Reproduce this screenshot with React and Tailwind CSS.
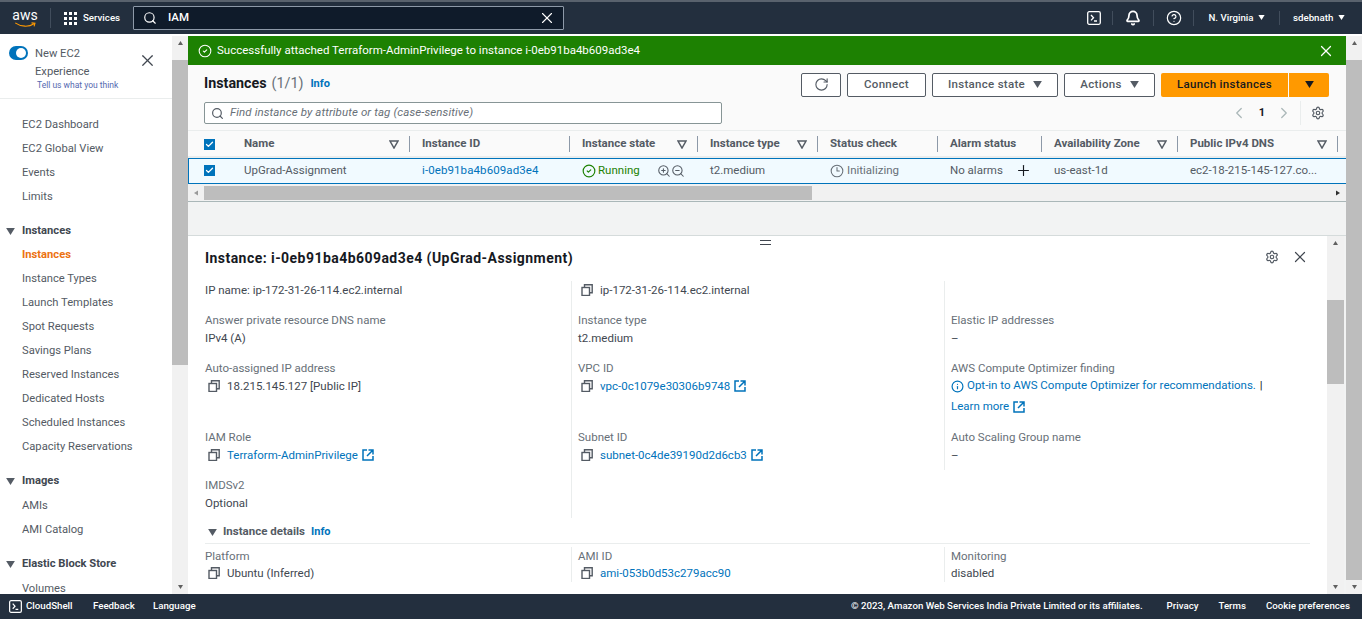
import React from 'react'
import { Search, X, Bell, CircleHelp, RotateCw, Settings, ChevronLeft, ChevronRight, ZoomIn, ZoomOut, Clock3, Plus, CircleCheck, Info, Check } from 'lucide-react'

const Tri = ({ className = '' }) => (
  <svg viewBox="0 0 10 8" className={className}><path d="M0 0h10L5 8z" fill="currentColor" /></svg>
)

const SortTri = () => (
  <svg viewBox="0 0 10 9" className="w-[10px] h-[9px] text-[#545b64]"><path d="M1 1h8L5 8z" fill="none" stroke="currentColor" strokeWidth="1.5" /></svg>
)

const CopyIcon = () => (
  <svg viewBox="0 0 12 12" className="w-[12px] h-[12px] shrink-0 ml-[3px] text-[#545b64]" fill="none" stroke="currentColor" strokeWidth="1.4">
    <rect x="1" y="3.5" width="7.5" height="8" />
    <path d="M3.5 3.5V.8h7.7v8H8.5" />
  </svg>
)

const ExtIcon = () => (
  <svg viewBox="0 0 12 12" className="w-[12px] h-[12px] shrink-0 -ml-[3px] text-[#0073bb]" fill="none" stroke="currentColor" strokeWidth="1.5">
    <path d="M5 1H1v10h10V7" />
    <path d="M6.5 1H11v4.5M11 1 5 7" />
  </svg>
)

const TerminalIcon = ({ size = 'w-[14px] h-[14px]' }) => (
  <svg viewBox="0 0 14 14" className={size} fill="none" stroke="currentColor" strokeWidth="1.3">
    <rect x="0.7" y="0.7" width="12.6" height="12.6" rx="1.5" />
    <path d="M4 4l2.5 2.7L4 9.4M7 10h3" />
  </svg>
)

const Checkbox = () => (
  <span className="w-[11px] h-[11px] bg-[#0073bb] flex items-center justify-center">
    <Check size={9} strokeWidth={3.5} className="text-white" />
  </span>
)

const VScroll = ({ top, height, className = '' }) => (
  <div className={`flex flex-col items-center bg-[#f1f1f1] shrink-0 relative ${className}`}>
    <div className="h-[14px] flex items-center text-[#606060]"><Tri className="w-[7px] h-[4px] rotate-180" /></div>
    <div className="w-full bg-[#bdbdbd]" style={{ marginTop: top, height }} />
    <div className="mt-auto h-[14px] flex items-center text-[#606060]"><Tri className="w-[7px] h-[4px]" /></div>
  </div>
)

const NavItem = ({ children, active }) => (
  <div className={`h-6 flex items-center pl-[22px] ${active ? 'text-[#ec7211] font-bold' : 'text-[#545b64]'}`}>{children}</div>
)

const NavGroup = ({ title, items, active, className = '', headClass = '' }) => (
  <div className={className}>
    <div className={`h-6 flex items-center font-bold text-[#414750] ${headClass}`}>
      <Tri className="w-[9px] h-[7px] ml-[6px] mr-[7px] text-[#545b64]" />
      {title}
    </div>
    {items.map((item) => (
      <NavItem key={item} active={item === active}>{item}</NavItem>
    ))}
  </div>
)

const columns = [
  { title: 'Name', w: 'w-[176px]', pl: 'pl-[10px]', sort: true },
  { title: 'Instance ID', w: 'w-[160px]', pl: 'pl-[12px]' },
  { title: 'Instance state', w: 'w-[128px]', pl: 'pl-[12px]', sort: true },
  { title: 'Instance type', w: 'w-[120px]', pl: 'pl-[12px]', sort: true },
  { title: 'Status check', w: 'w-[120px]', pl: 'pl-[12px]' },
  { title: 'Alarm status', w: 'w-[104px]', pl: 'pl-[12px]' },
  { title: 'Availability Zone', w: 'w-[136px]', pl: 'pl-[12px]', sort: true },
  { title: 'Public IPv4 DNS', w: 'w-[160px]', pl: 'pl-[12px]', sort: true },
]

const Label = ({ children }) => <div className="h-[18px] leading-[18px] text-[#687078]">{children}</div>
const Value = ({ children, className = '' }) => <div className={`h-[18px] leading-[18px] text-[#414750] flex items-center gap-[7px] ${className}`}>{children}</div>
const Link = ({ children }) => <span className="text-[#0073bb]">{children}</span>

export default function App() {
  return (
    <div className="h-[619px] w-[1362px] overflow-hidden flex flex-col text-[11.5px] bg-white" style={{ fontFamily: 'Roboto, sans-serif' }}>
      {/* top nav */}
      <div className="h-[34px] shrink-0 bg-[#232f3e] border-t-2 border-[#59626d] flex items-center text-white">
        <div className="w-[50px] flex flex-col items-center leading-none">
          <span className="text-[14px] leading-[12px]">aws</span>
          <svg viewBox="0 0 26 7" className="w-[25px] h-[6px] mt-[1px]"><path d="M1 1c7 5 16 5 22 1M20 1l4 .5-1 3.5" fill="none" stroke="#ff9900" strokeWidth="1.3" /></svg>
        </div>
        <div className="w-px h-5 bg-[#414d5c]" />
        <div className="grid grid-cols-3 gap-[2px] ml-[13px] w-[13px]">
          {Array.from({ length: 9 }).map((_, i) => <span key={i} className="w-[3px] h-[3px] bg-white" />)}
        </div>
        <span className="ml-[6px] w-[50px] text-[9.7px] font-medium">Services</span>
        <div className="w-[431px] h-[24px] bg-[#0f1b2a] border border-[#8d99a8] rounded-[1px] flex items-center pl-[9px] pr-[7px]">
          <Search size={14} strokeWidth={2} className="text-white" />
          <span className="ml-[11px] font-medium text-[11.5px]">IAM</span>
          <X size={18} strokeWidth={1.5} className="ml-auto" />
        </div>
        <div className="ml-auto flex items-center">
          <div className="w-[38px] flex justify-center border-r border-[#414d5c]"><TerminalIcon /></div>
          <div className="w-[41px] flex justify-center border-r border-[#414d5c]"><Bell size={16} strokeWidth={2.6} /></div>
          <div className="w-[40px] flex justify-center border-r border-[#414d5c]"><CircleHelp size={16} strokeWidth={1.8} /></div>
          <div className="w-[86px] flex justify-center items-center gap-[4px] border-r border-[#414d5c] text-[9.7px] font-medium">N. Virginia <Tri className="w-[7px] h-[5px]" /></div>
          <div className="w-[82px] flex items-center gap-[5px] pl-[13px] text-[9.7px] font-medium">sdebnath <Tri className="w-[7px] h-[5px]" /></div>
        </div>
      </div>

      <div className="h-[2px] shrink-0 bg-white" />

      <div className="flex-1 flex min-h-0">
        {/* sidebar */}
        <div className="w-[172px] shrink-0 overflow-hidden bg-white text-[11.2px]">
          <div className="h-[63px] border-b border-[#eaeded] flex pl-[9px] pt-[9px] relative">
            <span className="w-[19px] h-[14px] mt-[1px] rounded-full bg-[#0073bb] flex items-center justify-end pr-[2px]"><span className="w-[10px] h-[10px] bg-white rounded-full" /></span>
            <div className="ml-[7px] text-[#545b64] leading-[18px]">
              <div>New EC2</div>
              <div>Experience</div>
            </div>
            <X size={19} strokeWidth={1.5} className="absolute left-[138px] top-[15px] text-[#414750]" />
            <span className="absolute left-[37px] top-[43px] text-[8.5px] text-[#5569b0]">Tell us what you think</span>
          </div>
          <div className="pt-[14px]">
            <NavItem>EC2 Dashboard</NavItem>
            <NavItem>EC2 Global View</NavItem>
            <NavItem>Events</NavItem>
            <NavItem>Limits</NavItem>
            <NavGroup className="mt-[10px]" title="Instances" active="Instances" items={['Instances', 'Instance Types', 'Launch Templates', 'Spot Requests', 'Savings Plans', 'Reserved Instances', 'Dedicated Hosts', 'Scheduled Instances', 'Capacity Reservations']} />
            <NavGroup className="mt-[10px]" headClass="mb-px" title="Images" items={['AMIs', 'AMI Catalog']} />
            <NavGroup className="mt-[10px]" headClass="mb-px" title="Elastic Block Store" items={['Volumes']} />
          </div>
        </div>
        <VScroll top={10} height={305} className="w-[16px]" />

        {/* main column */}
        <div className="w-[1158px] shrink-0 flex flex-col min-h-0 bg-[#f2f3f3]">
          <div className="h-[29px] shrink-0 bg-[#1d8102] text-white flex items-center pl-[10px] pr-[11px]">
            <CircleCheck size={14} strokeWidth={1.8} />
            <span className="ml-[5px]">Successfully attached Terraform-AdminPrivilege to instance i-0eb91ba4b609ad3e4</span>
            <X size={18} strokeWidth={1.6} className="ml-auto" />
          </div>

          <div className="bg-[#fafafa] pl-[16px] pr-[17px] h-[66px] shrink-0 relative border-b border-[#eaeded]">
            <div className="flex items-center h-[31px] pt-[8px]">
              <span className="text-[14.3px] font-bold text-[#16191f] -mt-[2px]">Instances</span>
              <span className="text-[14.3px] text-[#687078] ml-[5px] -mt-[2px]">(1/1)</span>
              <span className="text-[11px] font-bold text-[#0073bb] ml-[7px]">Info</span>
              <div className="ml-auto flex items-center gap-[6px] font-medium text-[#545b64] tracking-[0.3px]">
                <button className="w-[40px] h-[24px] bg-white border border-[#545b64] rounded-[2px] flex items-center justify-center"><RotateCw size={15} strokeWidth={1.8} /></button>
                <button className="w-[79px] h-[24px] bg-white border border-[#545b64] rounded-[2px]">Connect</button>
                <button className="w-[126px] h-[24px] bg-white border border-[#545b64] rounded-[2px] flex items-center justify-center gap-[8px]">Instance state <Tri className="w-[9px] h-[7px]" /></button>
                <button className="w-[91px] h-[24px] bg-white border border-[#545b64] rounded-[2px] flex items-center justify-center gap-[8px]">Actions <Tri className="w-[9px] h-[7px]" /></button>
                <div className="flex gap-px">
                  <button className="w-[127px] h-[24px] bg-[#ff9900] text-[#16191f] rounded-l-[2px]">Launch instances</button>
                  <button className="w-[40px] h-[24px] bg-[#ff9900] text-[#16191f] rounded-r-[2px] flex items-center justify-center"><Tri className="w-[9px] h-[7px]" /></button>
                </div>
              </div>
            </div>
            <div className="flex items-center mt-[5px]">
              <div className="w-[518px] h-[22px] bg-white border border-[#879596] rounded-[2px] flex items-center pl-[6px]">
                <Search size={13} strokeWidth={2.2} className="text-[#545b64]" />
                <span className="ml-[6px] italic text-[#687078] tracking-[0.1px]">Find instance by attribute or tag (case-sensitive)</span>
              </div>
              <div className="ml-auto flex items-center h-[24px] text-[#aab7b8]">
                <ChevronLeft size={18} strokeWidth={1.7} />
                <span className="ml-[11px] mr-[10px] font-bold text-[#16191f] text-[11px]">1</span>
                <ChevronRight size={18} strokeWidth={1.7} />
                <div className="w-px h-[24px] bg-[#eaeded] ml-[7px]" />
                <Settings size={14} strokeWidth={2} className="text-[#545b64] ml-[10px] mr-[4px]" />
              </div>
            </div>
          </div>

          {/* table */}
          <div className="h-[27px] shrink-0 bg-[#fafafa] flex items-center pt-px font-bold text-[#545b64] border-b-2 border-[#eaeded]">
            <div className="w-[46px] pl-[16px] shrink-0 flex items-center"><Checkbox /></div>
            {columns.map((c) => (
              <div key={c.title} className={`${c.w} ${c.pl} shrink-0 h-[16px] flex items-center justify-between pr-[10px] border-r border-[#8d99a8] whitespace-nowrap`}>
                <span>{c.title}</span>
                {c.sort && <SortTri />}
              </div>
            ))}
          </div>
          <div className="h-[26px] shrink-0 bg-[#f1faff] border border-r-0 border-[#0073bb] flex items-center text-[#545b64] pb-px">
            <div className="w-[45px] pl-[15px] shrink-0 flex items-center"><Checkbox /></div>
            <div className="w-[176px] pl-[10px] shrink-0">UpGrad-Assignment</div>
            <div className="w-[160px] pl-[12px] shrink-0 text-[#0073bb] tracking-[0.1px]">i-0eb91ba4b609ad3e4</div>
            <div className="w-[128px] pl-[12px] shrink-0 flex items-center text-[#1d8102]">
              <CircleCheck size={14} strokeWidth={2} />
              <span className="ml-[2px]">Running</span>
              <ZoomIn size={14} strokeWidth={1.8} className="ml-[17px] text-[#545b64]" />
              <ZoomOut size={14} strokeWidth={1.8} className="text-[#545b64]" />
            </div>
            <div className="w-[120px] pl-[12px] shrink-0">t2.medium</div>
            <div className="w-[120px] pl-[12px] shrink-0 flex items-center text-[#687078]"><Clock3 size={14} strokeWidth={1.8} /><span className="ml-[3px]">Initializing</span></div>
            <div className="w-[104px] pl-[12px] shrink-0 flex items-center">No alarms<Plus size={17} strokeWidth={1.6} className="ml-[12px] text-[#16191f]" /></div>
            <div className="w-[136px] pl-[12px] shrink-0">us-east-1d</div>
            <div className="w-[140px] pl-[12px] shrink-0 whitespace-nowrap">ec2-18-215-145-127.co...</div>
          </div>
          <div className="h-[18px] shrink-0 flex items-center bg-[#f1f1f1] border-b border-[#aab7b8]">
            <div className="w-[16px] flex justify-center text-[#9a9a9a]"><Tri className="w-[6px] h-[4px] rotate-90" /></div>
            <div className="w-[608px] h-[14px] bg-[#bdbdbd]" />
            <div className="ml-auto w-[16px] flex justify-center text-[#303030]"><Tri className="w-[6px] h-[4px] -rotate-90" /></div>
          </div>

          <div className="h-[34px] shrink-0 border-b border-[#d5dbdb]" />

          {/* details */}
          <div className="flex-1 flex min-h-0">
            <div className="flex-1 min-w-0 overflow-hidden bg-white relative pl-[17px]">
              <span className="absolute left-[572px] top-[4px] w-[11px] h-[5px] border-y border-[#414750]" />
              <div className="h-[45px] flex items-center text-[14px] font-bold tracking-[0.45px] text-[#16191f] relative">
                Instance: i-0eb91ba4b609ad3e4 (UpGrad-Assignment)
                <Settings size={14} strokeWidth={2} className="absolute left-[1060px] top-[14px] text-[#545b64]" />
                <X size={18} strokeWidth={1.6} className="absolute left-[1086px] top-[12px] text-[#414750]" />
              </div>
              <div className="grid grid-cols-[366px_373px_366px] whitespace-nowrap">
                <div className="h-[30px]"><Value className="text-[#545b64]">IP name: ip-172-31-26-114.ec2.internal</Value></div>
                <div className="h-[30px] border-l border-[#eaeded] pl-[6px]"><Value><CopyIcon />ip-172-31-26-114.ec2.internal</Value></div>
                <div className="h-[30px] border-l border-[#eaeded] pl-[6px]" />

                <div className="h-[48px]"><Label>Answer private resource DNS name</Label><Value>IPv4 (A)</Value></div>
                <div className="h-[48px] border-l border-[#eaeded] pl-[6px]"><Label>Instance type</Label><Value>t2.medium</Value></div>
                <div className="h-[48px] border-l border-[#eaeded] pl-[6px]"><Label>Elastic IP addresses</Label><Value>–</Value></div>

                <div className="h-[69px]"><Label>Auto-assigned IP address</Label><Value><CopyIcon />18.215.145.127 [Public IP]</Value></div>
                <div className="h-[69px] border-l border-[#eaeded] pl-[6px]"><Label>VPC ID</Label><Value><CopyIcon /><Link>vpc-0c1079e30306b9748</Link><ExtIcon /></Value></div>
                <div className="h-[69px] border-l border-[#eaeded] pl-[6px]">
                  <Label>AWS Compute Optimizer finding</Label>
                  <div className="h-[18px] flex items-center gap-[3px] text-[#0073bb]"><Info size={13} strokeWidth={2.2} />Opt-in to AWS Compute Optimizer for recommendations.<span className="text-[#16191f] ml-[1px]">|</span></div>
                  <div className="h-[18px] mt-[3px] flex items-center gap-[7px] text-[#0073bb]">Learn more <ExtIcon /></div>
                </div>

                <div className="h-[48px]"><Label>IAM Role</Label><Value><CopyIcon /><Link>Terraform-AdminPrivilege</Link><ExtIcon /></Value></div>
                <div className="h-[48px] border-l border-[#eaeded] pl-[6px]"><Label>Subnet ID</Label><Value><CopyIcon /><Link>subnet-0c4de39190d2d6cb3</Link><ExtIcon /></Value></div>
                <div className="h-[42px] border-l border-[#eaeded] pl-[6px]"><Label>Auto Scaling Group name</Label><Value>–</Value></div>

                <div className="h-[42px]"><Label>IMDSv2</Label><Value>Optional</Value></div>
                <div className="h-[42px] border-l border-[#eaeded] pl-[6px]" />
                <div />
              </div>
              <div className="h-[26px] mr-[17px] flex items-center border-b border-[#eaeded] font-bold text-[#545b64] pl-[3px] pt-[3px]">
                <Tri className="w-[9px] h-[7px] mr-[6px]" />
                Instance details
                <span className="ml-[6px] text-[11px] text-[#0073bb]">Info</span>
              </div>
              <div className="grid grid-cols-[366px_373px_366px] whitespace-nowrap pt-[3px]">
                <div><Label>Platform</Label><Value className="-mt-px"><CopyIcon />Ubuntu (Inferred)</Value></div>
                <div className="border-l border-[#eaeded] pl-[6px]"><Label>AMI ID</Label><Value className="-mt-px"><CopyIcon /><Link>ami-053b0d53c279acc90</Link></Value></div>
                <div className="border-l border-[#eaeded] pl-[6px]"><Label>Monitoring</Label><Value className="-mt-px">disabled</Value></div>
              </div>
            </div>
            <VScroll top={50} height={84} className="w-[17px]" />
            <div className="w-[2px] bg-[#f2f3f3]" />
          </div>
        </div>
        <VScroll top={10} height={530} className="w-[16px]" />
      </div>

      {/* footer */}
      <div className="h-[25px] shrink-0 bg-[#232f3e] text-white text-[9.7px] font-medium flex items-center">
        <div className="ml-[9px]"><TerminalIcon size="w-[13px] h-[13px]" /></div>
        <span className="ml-[4px] w-[67px]">CloudShell</span>
        <span className="w-[60px]">Feedback</span>
        <span>Language</span>
        <div className="ml-auto flex items-center pr-[12px]">
          <span>© 2023, Amazon Web Services India Private Limited or its affiliates.</span>
          <span className="ml-[24px]">Privacy</span>
          <span className="ml-[20px]">Terms</span>
          <span className="ml-[20px]">Cookie preferences</span>
        </div>
      </div>
    </div>
  )
}
